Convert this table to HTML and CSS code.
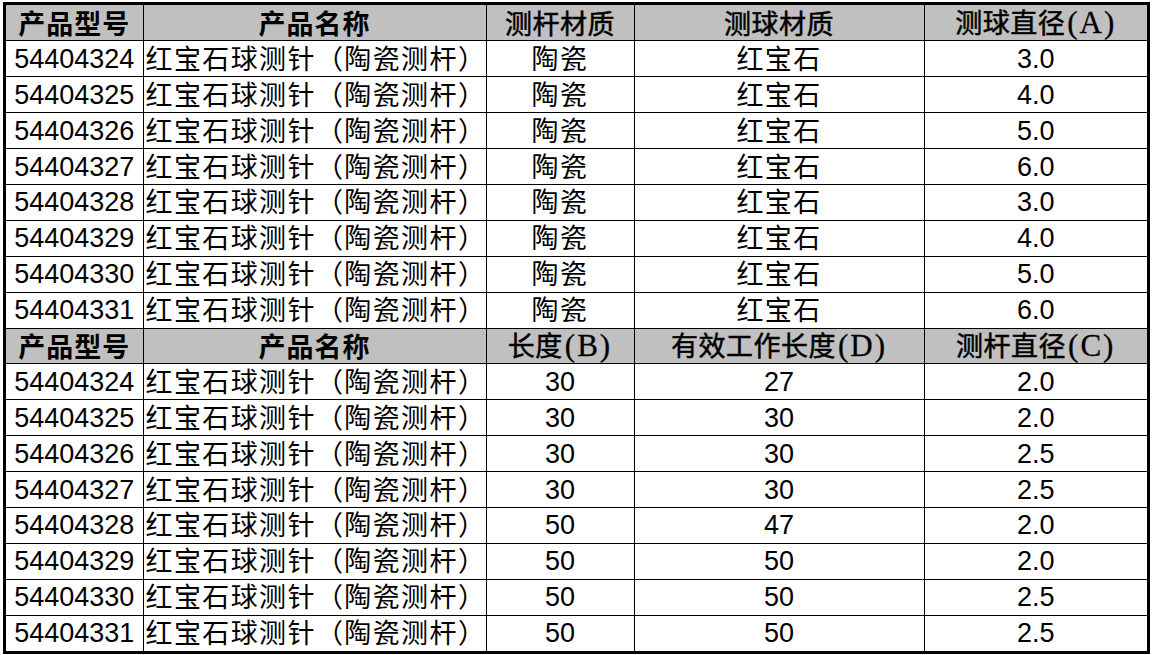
FILE: index.html
```html
<!DOCTYPE html>
<html lang="zh-CN">
<head>
<meta charset="utf-8">
<title>红宝石球测针</title>
<link rel="stylesheet" href="styles.css">
</head>
<body>
<div class="sheet">
<table class="grid">
<colgroup>
<col class="c1"><col class="c2"><col class="c3"><col class="c4"><col class="c5">
</colgroup>
<tbody>
<tr class="head"><td class="hs">产品型号</td><td class="hs">产品名称</td><td class="hf">测杆材质</td><td class="hf">测球材质</td><td class="hf">测球直径<span class="lat">(A)</span></td></tr>
<tr><td class="num">54404324</td><td class="name">红宝石球测针（陶瓷测杆）</td><td class="cjk">陶瓷</td><td class="cjk">红宝石</td><td class="num">3.0</td></tr>
<tr><td class="num">54404325</td><td class="name">红宝石球测针（陶瓷测杆）</td><td class="cjk">陶瓷</td><td class="cjk">红宝石</td><td class="num">4.0</td></tr>
<tr><td class="num">54404326</td><td class="name">红宝石球测针（陶瓷测杆）</td><td class="cjk">陶瓷</td><td class="cjk">红宝石</td><td class="num">5.0</td></tr>
<tr><td class="num">54404327</td><td class="name">红宝石球测针（陶瓷测杆）</td><td class="cjk">陶瓷</td><td class="cjk">红宝石</td><td class="num">6.0</td></tr>
<tr><td class="num">54404328</td><td class="name">红宝石球测针（陶瓷测杆）</td><td class="cjk">陶瓷</td><td class="cjk">红宝石</td><td class="num">3.0</td></tr>
<tr><td class="num">54404329</td><td class="name">红宝石球测针（陶瓷测杆）</td><td class="cjk">陶瓷</td><td class="cjk">红宝石</td><td class="num">4.0</td></tr>
<tr><td class="num">54404330</td><td class="name">红宝石球测针（陶瓷测杆）</td><td class="cjk">陶瓷</td><td class="cjk">红宝石</td><td class="num">5.0</td></tr>
<tr><td class="num">54404331</td><td class="name">红宝石球测针（陶瓷测杆）</td><td class="cjk">陶瓷</td><td class="cjk">红宝石</td><td class="num">6.0</td></tr>
<tr class="head"><td class="hs">产品型号</td><td class="hs">产品名称</td><td class="hf">长度<span class="lat">(B)</span></td><td class="hf">有效工作长度<span class="lat">(D)</span></td><td class="hf">测杆直径<span class="lat">(C)</span></td></tr>
<tr><td class="num">54404324</td><td class="name">红宝石球测针（陶瓷测杆）</td><td class="num">30</td><td class="num">27</td><td class="num">2.0</td></tr>
<tr><td class="num">54404325</td><td class="name">红宝石球测针（陶瓷测杆）</td><td class="num">30</td><td class="num">30</td><td class="num">2.0</td></tr>
<tr><td class="num">54404326</td><td class="name">红宝石球测针（陶瓷测杆）</td><td class="num">30</td><td class="num">30</td><td class="num">2.5</td></tr>
<tr><td class="num">54404327</td><td class="name">红宝石球测针（陶瓷测杆）</td><td class="num">30</td><td class="num">30</td><td class="num">2.5</td></tr>
<tr><td class="num">54404328</td><td class="name">红宝石球测针（陶瓷测杆）</td><td class="num">50</td><td class="num">47</td><td class="num">2.0</td></tr>
<tr><td class="num">54404329</td><td class="name">红宝石球测针（陶瓷测杆）</td><td class="num">50</td><td class="num">50</td><td class="num">2.0</td></tr>
<tr><td class="num">54404330</td><td class="name">红宝石球测针（陶瓷测杆）</td><td class="num">50</td><td class="num">50</td><td class="num">2.5</td></tr>
<tr><td class="num">54404331</td><td class="name">红宝石球测针（陶瓷测杆）</td><td class="num">50</td><td class="num">50</td><td class="num">2.5</td></tr>
</tbody>
</table>
</div>
</body>
</html>
```

FILE: styles.css
```css
html, body {
  margin: 0;
  padding: 0;
  background: #ffffff;
}

body {
  padding: 2px 0 0 3px;
  font-family: "Liberation Sans", "Noto Sans CJK SC", sans-serif;
  color: #000;
}

.sheet {
  width: 1141px;
  border: 3px solid #000;
}

.grid {
  width: 1141px;
  table-layout: fixed;
  border-collapse: collapse;
}

.c1 { width: 137px; }
.c2 { width: 343px; }
.c3 { width: 148px; }
.c4 { width: 290px; }
.c5 { width: 223px; }

.grid tr {
  height: 35.9px;
}

.grid td {
  border: 1px solid #000;
  padding: 0;
  font-size: 27px;
  line-height: 32px;
  text-align: center;
  vertical-align: middle;
  white-space: nowrap;
}

.grid tr:first-child td { border-top: none; }
.grid tr:last-child td { border-bottom: none; }
.grid td:first-child { border-left: none; }
.grid td:last-child { border-right: none; }

.grid .name {
  text-align: left;
  padding: 0 0 2px 2px;
  font-family: "Noto Sans CJK SC", sans-serif;
  font-size: 27px;
  letter-spacing: 1.4px;
}

.grid .cjk {
  padding-bottom: 2px;
  font-family: "Noto Sans CJK SC", sans-serif;
  font-size: 27px;
  letter-spacing: 1.4px;
}

.grid .num {
  font-family: "Liberation Sans", sans-serif;
  font-size: 27px;
}

.head td {
  background: #c0c0c0;
}

.grid .hs {
  font-family: "Noto Sans CJK SC", sans-serif;
  font-weight: 700;
  font-size: 27px;
  letter-spacing: 1px;
}

.grid .hf {
  font-family: "Noto Sans CJK SC", sans-serif;
  font-weight: 400;
  font-size: 27px;
  letter-spacing: 0.5px;
  -webkit-text-stroke: 0.5px #000;
}

.lat {
  font-family: "Liberation Serif", serif;
  font-size: 31px;
  letter-spacing: 2px;
  margin-left: 2px;
  -webkit-text-stroke: 0.3px #000;
}
```
